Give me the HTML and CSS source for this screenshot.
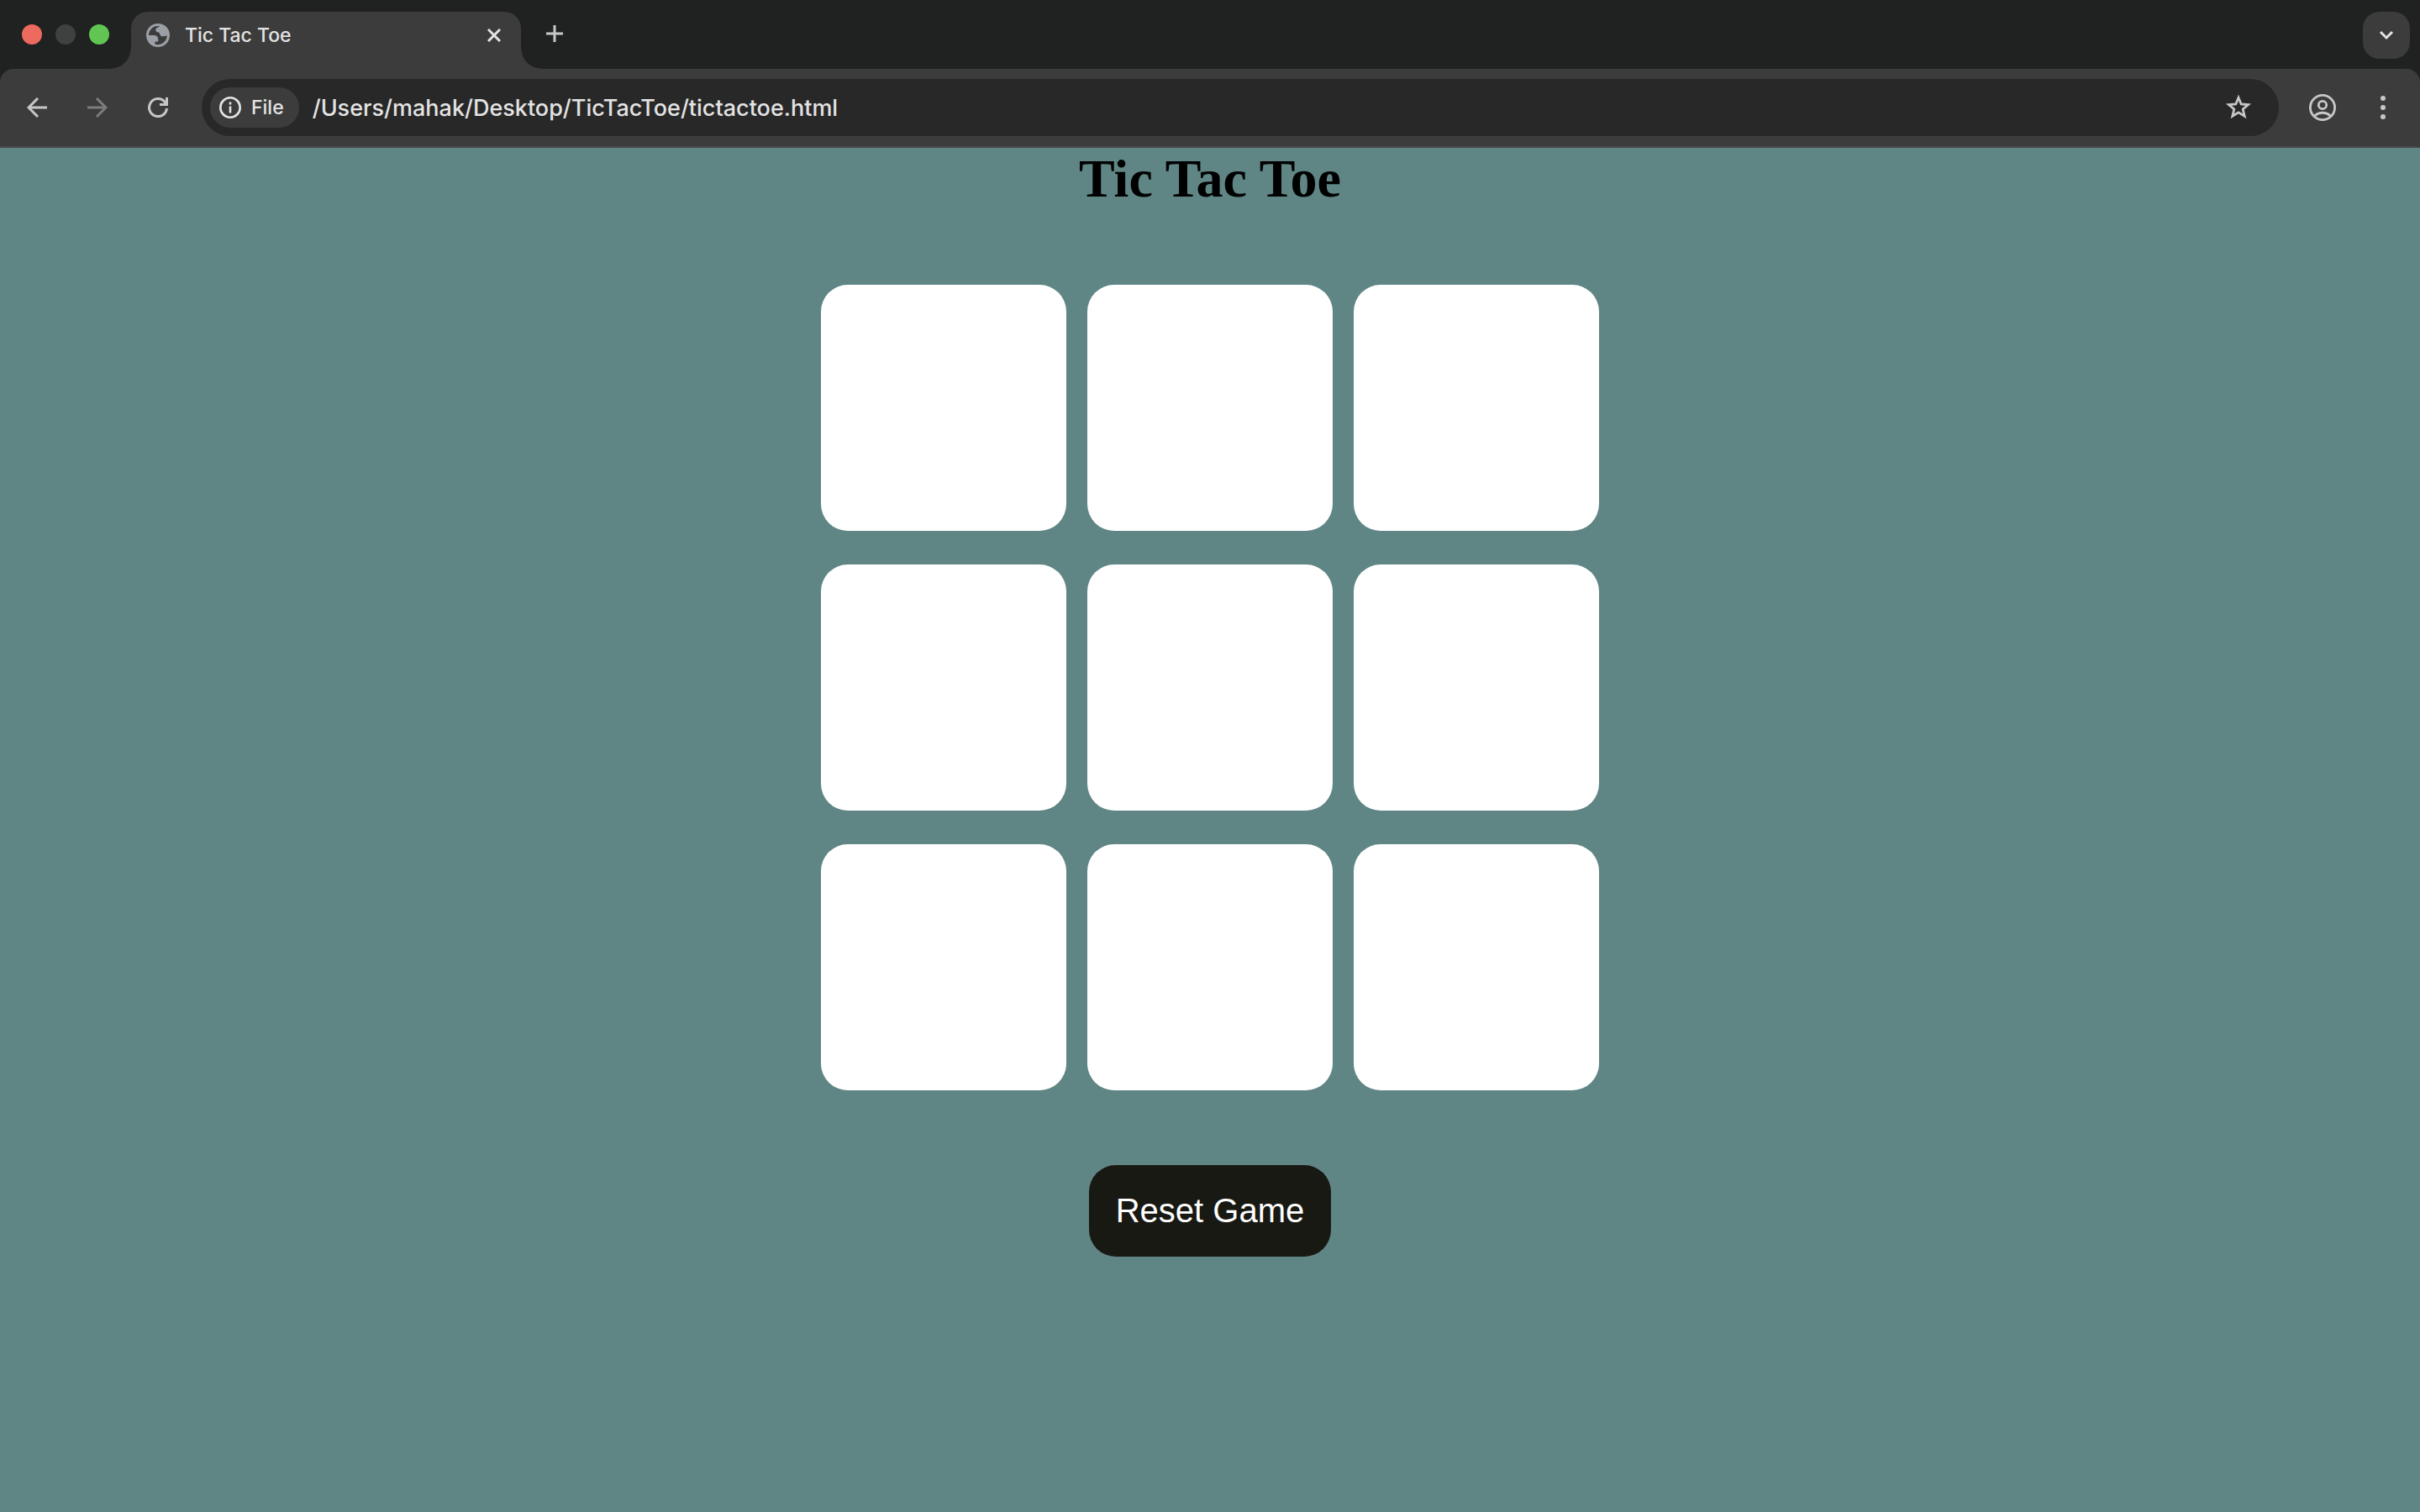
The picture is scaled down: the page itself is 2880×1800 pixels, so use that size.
FILE: index.html
```html
<!DOCTYPE html>
<html lang="en">
<head>
<meta charset="utf-8">
<title>Tic Tac Toe</title>
<link rel="stylesheet" href="styles.css">
</head>
<body>
<header class="browser">
  <div class="tab-strip">
    <div class="window-controls">
      <button class="light light-close" aria-label="Close window"></button>
      <button class="light light-minimize" aria-label="Minimize window"></button>
      <button class="light light-zoom" aria-label="Zoom window"></button>
    </div>
    <div class="tab">
      <svg class="favicon" viewBox="0 0 28 28" aria-hidden="true">
        <circle cx="14" cy="14" r="14" fill="#9aa0a6"/>
        <path d="M3 14a11 11 0 0 1 13-10.800c-.4 1.300-4.800 1.200-4.800 4.300 0 2 1.600 3 3.800 3 .8 0 1.200 3.800 3.200 4.600 2.200.8 4.500-.6 6.500-.9a11 11 0 0 1-14.200 10.500v-3.200h3.700v-3c0-3-2-4.500-4.700-4.500z" fill="#3c3c3c"/>
      </svg>
      <span class="tab-title">Tic Tac Toe</span>
      <button class="icon-button tab-close" aria-label="Close tab">
        <svg width="16" height="16" viewBox="0 0 16 16"><path d="M1 1l14 14M15 1L1 15" stroke="#e3e3e3" stroke-width="3"/></svg>
      </button>
    </div>
    <button class="icon-button new-tab" aria-label="New tab">
      <svg width="20" height="20" viewBox="0 0 20 20"><path d="M10 0v20M0 10h20" stroke="#c7c7c7" stroke-width="3"/></svg>
    </button>
    <button class="icon-button tab-search" aria-label="Search tabs">
      <svg width="18" height="12" viewBox="0 0 18 12"><path d="M2 2l7 7 7-7" fill="none" stroke="#e3e3e3" stroke-width="3"/></svg>
    </button>
  </div>
  <div class="toolbar">
    <button class="icon-button tool" aria-label="Back">
      <svg width="24" height="24" viewBox="0 0 24 24"><path d="M24 12H2M13 1L2 12l11 11" fill="none" stroke="#c7c7c7" stroke-width="3"/></svg>
    </button>
    <button class="icon-button tool" aria-label="Forward">
      <svg width="24" height="24" viewBox="0 0 24 24"><path d="M0 12h22M11 1l11 11-11 11" fill="none" stroke="#7c7c7c" stroke-width="3"/></svg>
    </button>
    <button class="icon-button tool" aria-label="Reload">
      <svg width="24" height="24" viewBox="0 0 24 24"><path d="M22.500 13A10.500 10.500 0 1 1 20 5.200l2.500 3M22.500 0v8.500H14" fill="none" stroke="#c7c7c7" stroke-width="3"/></svg>
    </button>
    <div class="omnibox">
      <button class="site-info">
        <svg width="26" height="26" viewBox="0 0 26 26"><circle cx="13" cy="13" r="11.700" fill="none" stroke="#e3e3e3" stroke-width="2.600"/><path d="M13 11.500v8M13 6.500v3" stroke="#e3e3e3" stroke-width="2.600"/></svg>
        File
      </button>
      <input class="url" type="text" aria-label="Address" value="/Users/mahak/Desktop/TicTacToe/tictactoe.html">
      <button class="icon-button star" aria-label="Bookmark this page">
        <svg width="32" height="32" viewBox="0 0 32 32"><path d="M16 4.200l3.200 7.800 8.400.6-6.400 5.400 2 8.200-7.200-4.400-7.200 4.400 2-8.200-6.400-5.400 8.400-.6z" fill="none" stroke="#c7c7c7" stroke-width="2.800"/></svg>
      </button>
    </div>
    <button class="icon-button tool" aria-label="Profile">
      <svg width="32" height="32" viewBox="0 0 32 32" fill="none" stroke="#c7c7c7" stroke-width="2.800"><circle cx="16" cy="16" r="14.600"/><circle cx="16" cy="13" r="4.700"/><path d="M6.500 26c5.500-5 13.500-5 19 0"/></svg>
    </button>
    <button class="icon-button tool" aria-label="Menu">
      <svg width="6" height="28" viewBox="0 0 6 28" fill="#c7c7c7"><circle cx="3" cy="3" r="3"/><circle cx="3" cy="14" r="3"/><circle cx="3" cy="25" r="3"/></svg>
    </button>
  </div>
</header>
<main class="page">
  <h1 class="title">Tic Tac Toe</h1>
  <div class="board">
    <button class="cell" aria-label="Row 1, column 1"></button>
    <button class="cell" aria-label="Row 1, column 2"></button>
    <button class="cell" aria-label="Row 1, column 3"></button>
    <button class="cell" aria-label="Row 2, column 1"></button>
    <button class="cell" aria-label="Row 2, column 2"></button>
    <button class="cell" aria-label="Row 2, column 3"></button>
    <button class="cell" aria-label="Row 3, column 1"></button>
    <button class="cell" aria-label="Row 3, column 2"></button>
    <button class="cell" aria-label="Row 3, column 3"></button>
  </div>
  <button class="reset">Reset Game</button>
</main>
</body>
</html>
```

FILE: styles.css
```css
* {
  box-sizing: border-box;
  margin: 0;
  padding: 0;
}

body {
  min-height: 100vh;
  background: #5f8585;
}

button,
input {
  border: 0;
  background: none;
  font: inherit;
  color: inherit;
}

svg {
  display: block;
  flex: none;
}

/* Browser window frame */
.browser {
  background: #202221;
  color: #e3e3e3;
  font-family: Inter, "Liberation Sans", sans-serif;
  font-size: 23px;
  font-weight: 500;
}

.tab-strip {
  display: flex;
  align-items: flex-start;
  padding: 14px 12px 0 26px;
}

.window-controls {
  display: flex;
  gap: 16px;
  padding-top: 15px;
  margin-right: 26px;
}

.light {
  width: 24px;
  height: 24px;
  border-radius: 50%;
}

.light-close { background: #ed6a5e; }
.light-minimize { background: #3f4140; }
.light-zoom { background: #61c554; }

.tab {
  position: relative;
  display: flex;
  align-items: center;
  width: 464px;
  height: 68px;
  padding: 0 12px 12px 18px;
  border-radius: 20px 20px 0 0;
  background: #3c3c3c;
}

/* Concave feet where the tab meets the toolbar */
.tab::before,
.tab::after {
  content: "";
  position: absolute;
  bottom: 0;
  width: 24px;
  height: 24px;
}

.tab::before {
  right: 100%;
  background: radial-gradient(circle at 0 0, transparent 23px, #3c3c3c 24px);
}

.tab::after {
  left: 100%;
  background: radial-gradient(circle at 100% 0, transparent 23px, #3c3c3c 24px);
}

.favicon {
  width: 28px;
  height: 28px;
}

.tab-title {
  flex: 1;
  margin-left: 18px;
}

.icon-button {
  display: flex;
  align-items: center;
  justify-content: center;
}

.tab-close {
  width: 40px;
  height: 40px;
}

.new-tab {
  width: 56px;
  height: 52px;
  margin-left: 12px;
}

.tab-search {
  width: 56px;
  height: 56px;
  margin-left: auto;
  border-radius: 20px;
  background: #3c3c3c;
}

.toolbar {
  display: flex;
  align-items: center;
  padding: 12px 8px;
  border-bottom: 2px solid #474747;
  border-radius: 16px 16px 0 0;
  background: #3c3c3c;
}

.tool {
  width: 72px;
  height: 68px;
}

.omnibox {
  display: flex;
  flex: 1;
  align-items: center;
  height: 68px;
  margin: 0 16px;
  padding: 0 16px 0 10px;
  border-radius: 34px;
  background: #282828;
}

.site-info {
  display: flex;
  align-items: center;
  gap: 12px;
  height: 48px;
  padding: 0 18px 0 11px;
  border-radius: 24px;
  background: #3c3c3c;
}

.url {
  flex: 1;
  min-width: 0;
  margin-left: 16px;
  font-size: 27px;
  outline: 0;
}

.star {
  width: 64px;
  height: 64px;
}

/* Game */
.page {
  display: flex;
  flex-direction: column;
  align-items: center;
  padding-bottom: 90px;
}

.title {
  font: bold 64px/74px "Liberation Serif", "Times New Roman", serif;
  color: #000;
}

.board {
  display: grid;
  grid-template-columns: repeat(3, 292px);
  grid-auto-rows: 293px;
  gap: 40px 25px;
  margin: 89px 0;
}

.cell {
  border-radius: 32px;
  background: #fff;
}

.reset {
  padding: 32px;
  border-radius: 32px;
  background: #191913;
  color: #fff;
  font: 40px/45px "Liberation Sans", Arial, sans-serif;
}
```
